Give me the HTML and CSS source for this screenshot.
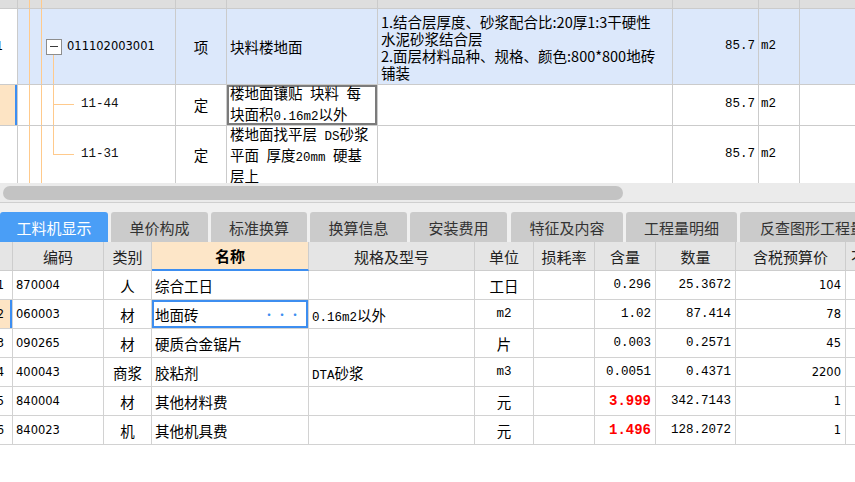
FILE: index.html
```html
<!DOCTYPE html>
<html lang="zh-CN">
<head>
<meta charset="utf-8">
<title>工料机显示</title>
<link rel="stylesheet" href="styles.css">
</head>
<body>
<div class="app">
  <div class="top">
    <div class="tgrid">
      <div class="cell th rn"></div>
      <div class="cell th tree"></div>
      <div class="cell th"></div>
      <div class="cell th"></div>
      <div class="cell th"></div>
      <div class="cell th"></div>
      <div class="cell th"></div>
      <div class="cell th"></div>

      <div class="cell rn"><span class="num">1</span></div>
      <div class="cell sel tree tree-r1"><span class="minus"></span><span class="code">011102003001</span></div>
      <div class="cell sel center">项</div>
      <div class="cell sel"><span>块料楼地面</span></div>
      <div class="cell sel multi"><span class="txt">1.结合层厚度、砂浆配合比:20厚1:3干硬性<br>水泥砂浆结合层<br>2.面层材料品种、规格、颜色:800*800地砖<br>铺装</span></div>
      <div class="cell sel right"><span class="mono">85.7</span></div>
      <div class="cell sel unit"><span class="mono">m2</span></div>
      <div class="cell sel"></div>

      <div class="cell rn rn-cur"></div>
      <div class="cell tree tree-r2"><span class="mono sub">11-44</span></div>
      <div class="cell center">定</div>
      <div class="cell multi cur"><span class="txt">楼地面镶贴<span class="mono"> </span>块料<span class="mono"> </span>每<br>块面积<span class="mono">0.16m2</span>以外</span></div>
      <div class="cell"></div>
      <div class="cell right"><span class="mono">85.7</span></div>
      <div class="cell unit"><span class="mono">m2</span></div>
      <div class="cell"></div>

      <div class="cell rn"></div>
      <div class="cell tree tree-r3"><span class="mono sub">11-31</span></div>
      <div class="cell center">定</div>
      <div class="cell multi"><span class="txt">楼地面找平层<span class="mono"> DS</span>砂浆<br>平面<span class="mono"> </span>厚度<span class="mono">20mm </span>硬基<br>层上</span></div>
      <div class="cell"></div>
      <div class="cell right"><span class="mono">85.7</span></div>
      <div class="cell unit"><span class="mono">m2</span></div>
      <div class="cell"></div>
    </div>
  </div>

  <div class="hscroll"><div class="thumb"></div></div>

  <div class="tabs">
    <div class="tab active w108">工料机显示</div>
    <div class="tab w97">单价构成</div>
    <div class="tab w96">标准换算</div>
    <div class="tab w97">换算信息</div>
    <div class="tab w97">安装费用</div>
    <div class="tab w112 g4">特征及内容</div>
    <div class="tab w111">工程量明细</div>
    <div class="tab w140 left">反查图形工程量</div>
  </div>

  <div class="bottom">
    <div class="bgrid">
      <div class="bh"></div>
      <div class="bh">编码</div>
      <div class="bh">类别</div>
      <div class="bh bh-cur">名称</div>
      <div class="bh">规格及型号</div>
      <div class="bh">单位</div>
      <div class="bh">损耗率</div>
      <div class="bh">含量</div>
      <div class="bh">数量</div>
      <div class="bh">含税预算价</div>
      <div class="bh bh-left">不含税预算价</div>

      <div class="bc brn"><span class="num">1</span></div>
      <div class="bc"><span class="code">870004</span></div>
      <div class="bc center">人</div>
      <div class="bc">综合工日</div>
      <div class="bc"></div>
      <div class="bc center">工日</div>
      <div class="bc"></div>
      <div class="bc right"><span class="mono">0.296</span></div>
      <div class="bc right"><span class="mono">25.3672</span></div>
      <div class="bc right"><span class="code">104</span></div>
      <div class="bc"></div>

      <div class="bc brn brn-cur"><span class="num">2</span></div>
      <div class="bc"><span class="code">060003</span></div>
      <div class="bc center">材</div>
      <div class="bc bcur"><span>地面砖</span><span class="dots">···</span></div>
      <div class="bc"><span class="txt"><span class="mono">0.16m2</span>以外</span></div>
      <div class="bc center"><span class="mono">m2</span></div>
      <div class="bc"></div>
      <div class="bc right"><span class="mono">1.02</span></div>
      <div class="bc right"><span class="mono">87.414</span></div>
      <div class="bc right"><span class="code">78</span></div>
      <div class="bc"></div>

      <div class="bc brn"><span class="num">3</span></div>
      <div class="bc"><span class="code">090265</span></div>
      <div class="bc center">材</div>
      <div class="bc">硬质合金锯片</div>
      <div class="bc"></div>
      <div class="bc center">片</div>
      <div class="bc"></div>
      <div class="bc right"><span class="mono">0.003</span></div>
      <div class="bc right"><span class="mono">0.2571</span></div>
      <div class="bc right"><span class="code">45</span></div>
      <div class="bc"></div>

      <div class="bc brn"><span class="num">4</span></div>
      <div class="bc"><span class="code">400043</span></div>
      <div class="bc center">商浆</div>
      <div class="bc">胶粘剂</div>
      <div class="bc"><span class="txt"><span class="mono">DTA</span>砂浆</span></div>
      <div class="bc center"><span class="mono">m3</span></div>
      <div class="bc"></div>
      <div class="bc right"><span class="mono">0.0051</span></div>
      <div class="bc right"><span class="mono">0.4371</span></div>
      <div class="bc right"><span class="code">2200</span></div>
      <div class="bc"></div>

      <div class="bc brn"><span class="num">5</span></div>
      <div class="bc"><span class="code">840004</span></div>
      <div class="bc center">材</div>
      <div class="bc">其他材料费</div>
      <div class="bc"></div>
      <div class="bc center">元</div>
      <div class="bc"></div>
      <div class="bc right"><span class="mono red">3.999</span></div>
      <div class="bc right"><span class="mono">342.7143</span></div>
      <div class="bc right"><span class="code">1</span></div>
      <div class="bc"></div>

      <div class="bc brn"><span class="num">6</span></div>
      <div class="bc"><span class="code">840023</span></div>
      <div class="bc center">机</div>
      <div class="bc">其他机具费</div>
      <div class="bc"></div>
      <div class="bc center">元</div>
      <div class="bc"></div>
      <div class="bc right"><span class="mono red">1.496</span></div>
      <div class="bc right"><span class="mono">128.2072</span></div>
      <div class="bc right"><span class="code">1</span></div>
      <div class="bc"></div>
    </div>
  </div>
</div>
</body>
</html>
```

FILE: styles.css
```css
html, body {
  margin: 0;
  padding: 0;
  width: 855px;
  height: 482px;
  overflow: hidden;
  background: #ffffff;
}

.app {
  width: 855px;
  font-family: "Noto Sans CJK SC", "Noto Sans", sans-serif;
  font-size: 14.5px;
  color: #000;
  display: flex;
  flex-direction: column;
}

/* ---------- top grid ---------- */
.top {
  height: 183px;
  overflow: hidden;
}

.tgrid {
  display: grid;
  grid-template-columns: 18px 158px 51px 151px 295px 86px 41px 80px;
  grid-template-rows: 9px 76px 41px 58px;
  width: 880px;
}

.cell {
  box-sizing: border-box;
  border-right: 1px solid #cbcbcb;
  border-bottom: 1px solid #cbcbcb;
  display: flex;
  align-items: center;
  padding-left: 3px;
  white-space: nowrap;
  overflow: hidden;
  line-height: 17.5px;
  background-color: #ffffff;
}

.txt {
  display: block;
  white-space: pre;
}

.th {
  background-color: #dedede;
}

.sel {
  background-color: #dce8fb;
}

.center {
  justify-content: center;
  padding-left: 0;
}

.right {
  justify-content: flex-end;
  padding-right: 3px;
}

.unit {
  padding-left: 2px;
}

.multi {
  line-height: 17px;
}

.cur {
  box-shadow: inset 0 0 0 2px #7b7b7b;
}

.rn {
  justify-content: flex-end;
  padding-right: 14px;
  padding-left: 0;
}

.rn-cur {
  background-color: #fde4c4;
  box-shadow: inset -2px 0 0 #3c8ef2;
}

.num {
  font-family: "DejaVu Sans", sans-serif;
  font-size: 11.5px;
}

.code {
  font-family: "DejaVu Sans", sans-serif;
  font-size: 11.5px;
}

.mono {
  font-family: "Liberation Mono", monospace;
  font-size: 12.5px;
}

.red {
  color: #ff0000;
  font-weight: bold;
  font-size: 14px;
}

/* tree guide lines */
.tree {
  --tl: #ffca8c;
  background-image:
    linear-gradient(var(--tl), var(--tl)),
    linear-gradient(var(--tl), var(--tl));
  background-size: 1px 100%, 1px 100%;
  background-position: 11px 0, 23px 0;
  background-repeat: no-repeat;
}

.tree-r1 {
  padding-left: 28px;
  background-image:
    linear-gradient(var(--tl), var(--tl)),
    linear-gradient(var(--tl), var(--tl)),
    linear-gradient(var(--tl), var(--tl));
  background-size: 1px 100%, 1px 100%, 1px 31px;
  background-position: 11px 0, 23px 0, 35px 100%;
}

.tree-r2 {
  padding-left: 63px;
  background-image:
    linear-gradient(var(--tl), var(--tl)),
    linear-gradient(var(--tl), var(--tl)),
    linear-gradient(var(--tl), var(--tl)),
    linear-gradient(var(--tl), var(--tl));
  background-size: 1px 100%, 1px 100%, 1px 100%, 21px 1px;
  background-position: 11px 0, 23px 0, 35px 0, 35px 19px;
}

.tree-r3 {
  padding-left: 63px;
  background-image:
    linear-gradient(var(--tl), var(--tl)),
    linear-gradient(var(--tl), var(--tl)),
    linear-gradient(var(--tl), var(--tl)),
    linear-gradient(var(--tl), var(--tl));
  background-size: 1px 100%, 1px 100%, 1px 29px, 21px 1px;
  background-position: 11px 0, 23px 0, 35px 0, 35px 28px;
}

.minus {
  box-sizing: border-box;
  width: 16px;
  height: 16px;
  border: 1px solid #8d8d8d;
  background: linear-gradient(#3a3a3a, #3a3a3a) center / 8px 1px no-repeat, #ffffff;
  margin-right: 5px;
  flex: none;
}

.sub {
  color: #111;
}

/* ---------- horizontal scrollbar ---------- */
.hscroll {
  height: 20px;
  box-sizing: border-box;
  background: #ebebeb;
  border-bottom: 1px solid #cfcfcf;
  padding: 3px 0 3px 3px;
  display: flex;
}

.thumb {
  width: 620px;
  height: 14px;
  border-radius: 7px;
  background: #c3c3c3;
}

/* ---------- tabs ---------- */
.tabs {
  height: 39px;
  box-sizing: border-box;
  background: #f0f0f0;
  padding-top: 9px;
  display: flex;
  gap: 3px;
  overflow: hidden;
}

.tab {
  flex: none;
  height: 30px;
  box-sizing: border-box;
  background: #cbcbcb;
  color: #333333;
  font-size: 15px;
  border-radius: 3px 3px 0 0;
  display: flex;
  align-items: center;
  justify-content: center;
  white-space: nowrap;
}

.tab.active {
  background: #4a9ef6;
  color: #ffffff;
}

.tab.left {
  justify-content: flex-start;
  padding-left: 20px;
}

.w108 { width: 108px; }
.w97 { width: 97px; }
.w96 { width: 96px; }
.w112 { width: 112px; }
.w111 { width: 111px; }
.w140 { width: 140px; }
.g4 { margin-left: 1px; }

/* ---------- bottom grid ---------- */
.bottom {
  overflow: hidden;
}

.bgrid {
  display: grid;
  grid-template-columns: 13px 91px 48px 157px 166px 59px 61px 61px 80px 110px 60px;
  grid-auto-rows: 29px;
  width: 906px;
}

.bh {
  box-sizing: border-box;
  background: #e5e5e5;
  border-right: 1px solid #cdcdcd;
  border-bottom: 1px solid #cdcdcd;
  display: flex;
  align-items: center;
  justify-content: center;
  font-size: 15px;
  color: #222;
  white-space: nowrap;
  overflow: hidden;
}

.bh-cur {
  background: #fde6c8;
  font-weight: bold;
  color: #000;
  border-bottom: 2px solid #3d8ef0;
}

.bh-left {
  justify-content: flex-start;
  padding-left: 5px;
}

.bc {
  box-sizing: border-box;
  border-right: 1px solid #d2d2d2;
  border-bottom: 1px solid #d2d2d2;
  display: flex;
  align-items: center;
  padding-left: 3px;
  white-space: nowrap;
  overflow: hidden;
  background: #ffffff;
}

.bc.center {
  justify-content: center;
  padding-left: 0;
}

.bc.right {
  justify-content: flex-end;
  padding-right: 4px;
}

.brn {
  justify-content: flex-end;
  padding-left: 0;
  padding-right: 8px;
}

.brn-cur {
  background: #fde4c4;
  box-shadow: inset -2px 0 0 #3c8ef2;
}

.bcur {
  box-shadow: inset 0 0 0 2px #3d8ef0;
  justify-content: space-between;
  padding-right: 6px;
}

.dots {
  color: #3d8ef0;
  font-size: 12px;
  letter-spacing: 1px;
}
```
